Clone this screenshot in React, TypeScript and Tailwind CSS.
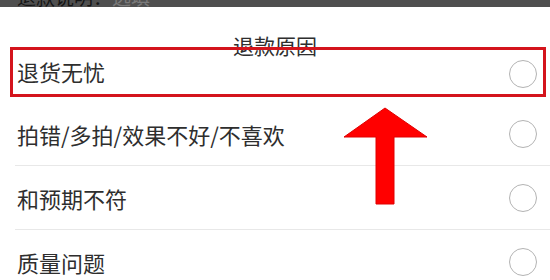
const reasons = ['退货无忧', '拍错/多拍/效果不好/不喜欢', '和预期不符', '质量问题'];

const Radio = () => (
  <div className="w-[28px] h-[28px] rounded-full border-[1.5px] border-[#b3b3b3] bg-white shrink-0" />
);

const App = () => {
  return (
    <div
      className="relative w-[550px] h-[280px] overflow-hidden bg-white text-[#2e2e2e]"
      style={{ fontFamily: '"Noto Sans CJK SC", "Noto Sans", sans-serif' }}
    >
      {/* cut-off header of the page behind the sheet */}
      <div className="h-[7px] bg-[#4f4f4f] overflow-hidden pl-[17px]">
        <div className="-mt-[14px] text-[19px] leading-[22px] whitespace-nowrap">
          <span className="text-[#151515]">退款说明：</span>
          <span className="text-[#7a7a7a]">选填</span>
        </div>
      </div>

      <div className="h-[39px] pt-[28px] text-center">
        <div className="text-[21px] leading-[21px]">退款原因</div>
      </div>

      <div className="flex flex-col">
        {reasons.map((r, i) => (
          <div key={r} className={`flex ${i === 0 ? 'h-[56px]' : 'h-[64px]'}`}>
            <div
              className={`flex-1 flex items-center justify-between ml-[15px] pl-[2px] pr-[13px] ${
                i === 1 || i === 2 ? 'border-b border-[#e8e8e8]' : ''
              }`}
            >
              <span className={`text-[22px] leading-none ${i === 0 ? 'mb-[6px]' : ''}`}>{r}</span>
              <Radio />
            </div>
          </div>
        ))}
      </div>

      {/* annotation: red highlight box */}
      <div className="absolute left-[10px] top-[47px] w-[536px] h-[50px] border-[3px] border-[#d4141c]" />

      {/* annotation: red arrow */}
      <svg className="absolute left-0 top-0" width="550" height="280" viewBox="0 0 550 280">
        <polygon
          points="385,108 427,137 394,137 394,204 376,204 376,137 344,137"
          fill="#ff0000"
          stroke="#e00000"
          strokeWidth="1"
        />
      </svg>
    </div>
  );
};

export default App;
